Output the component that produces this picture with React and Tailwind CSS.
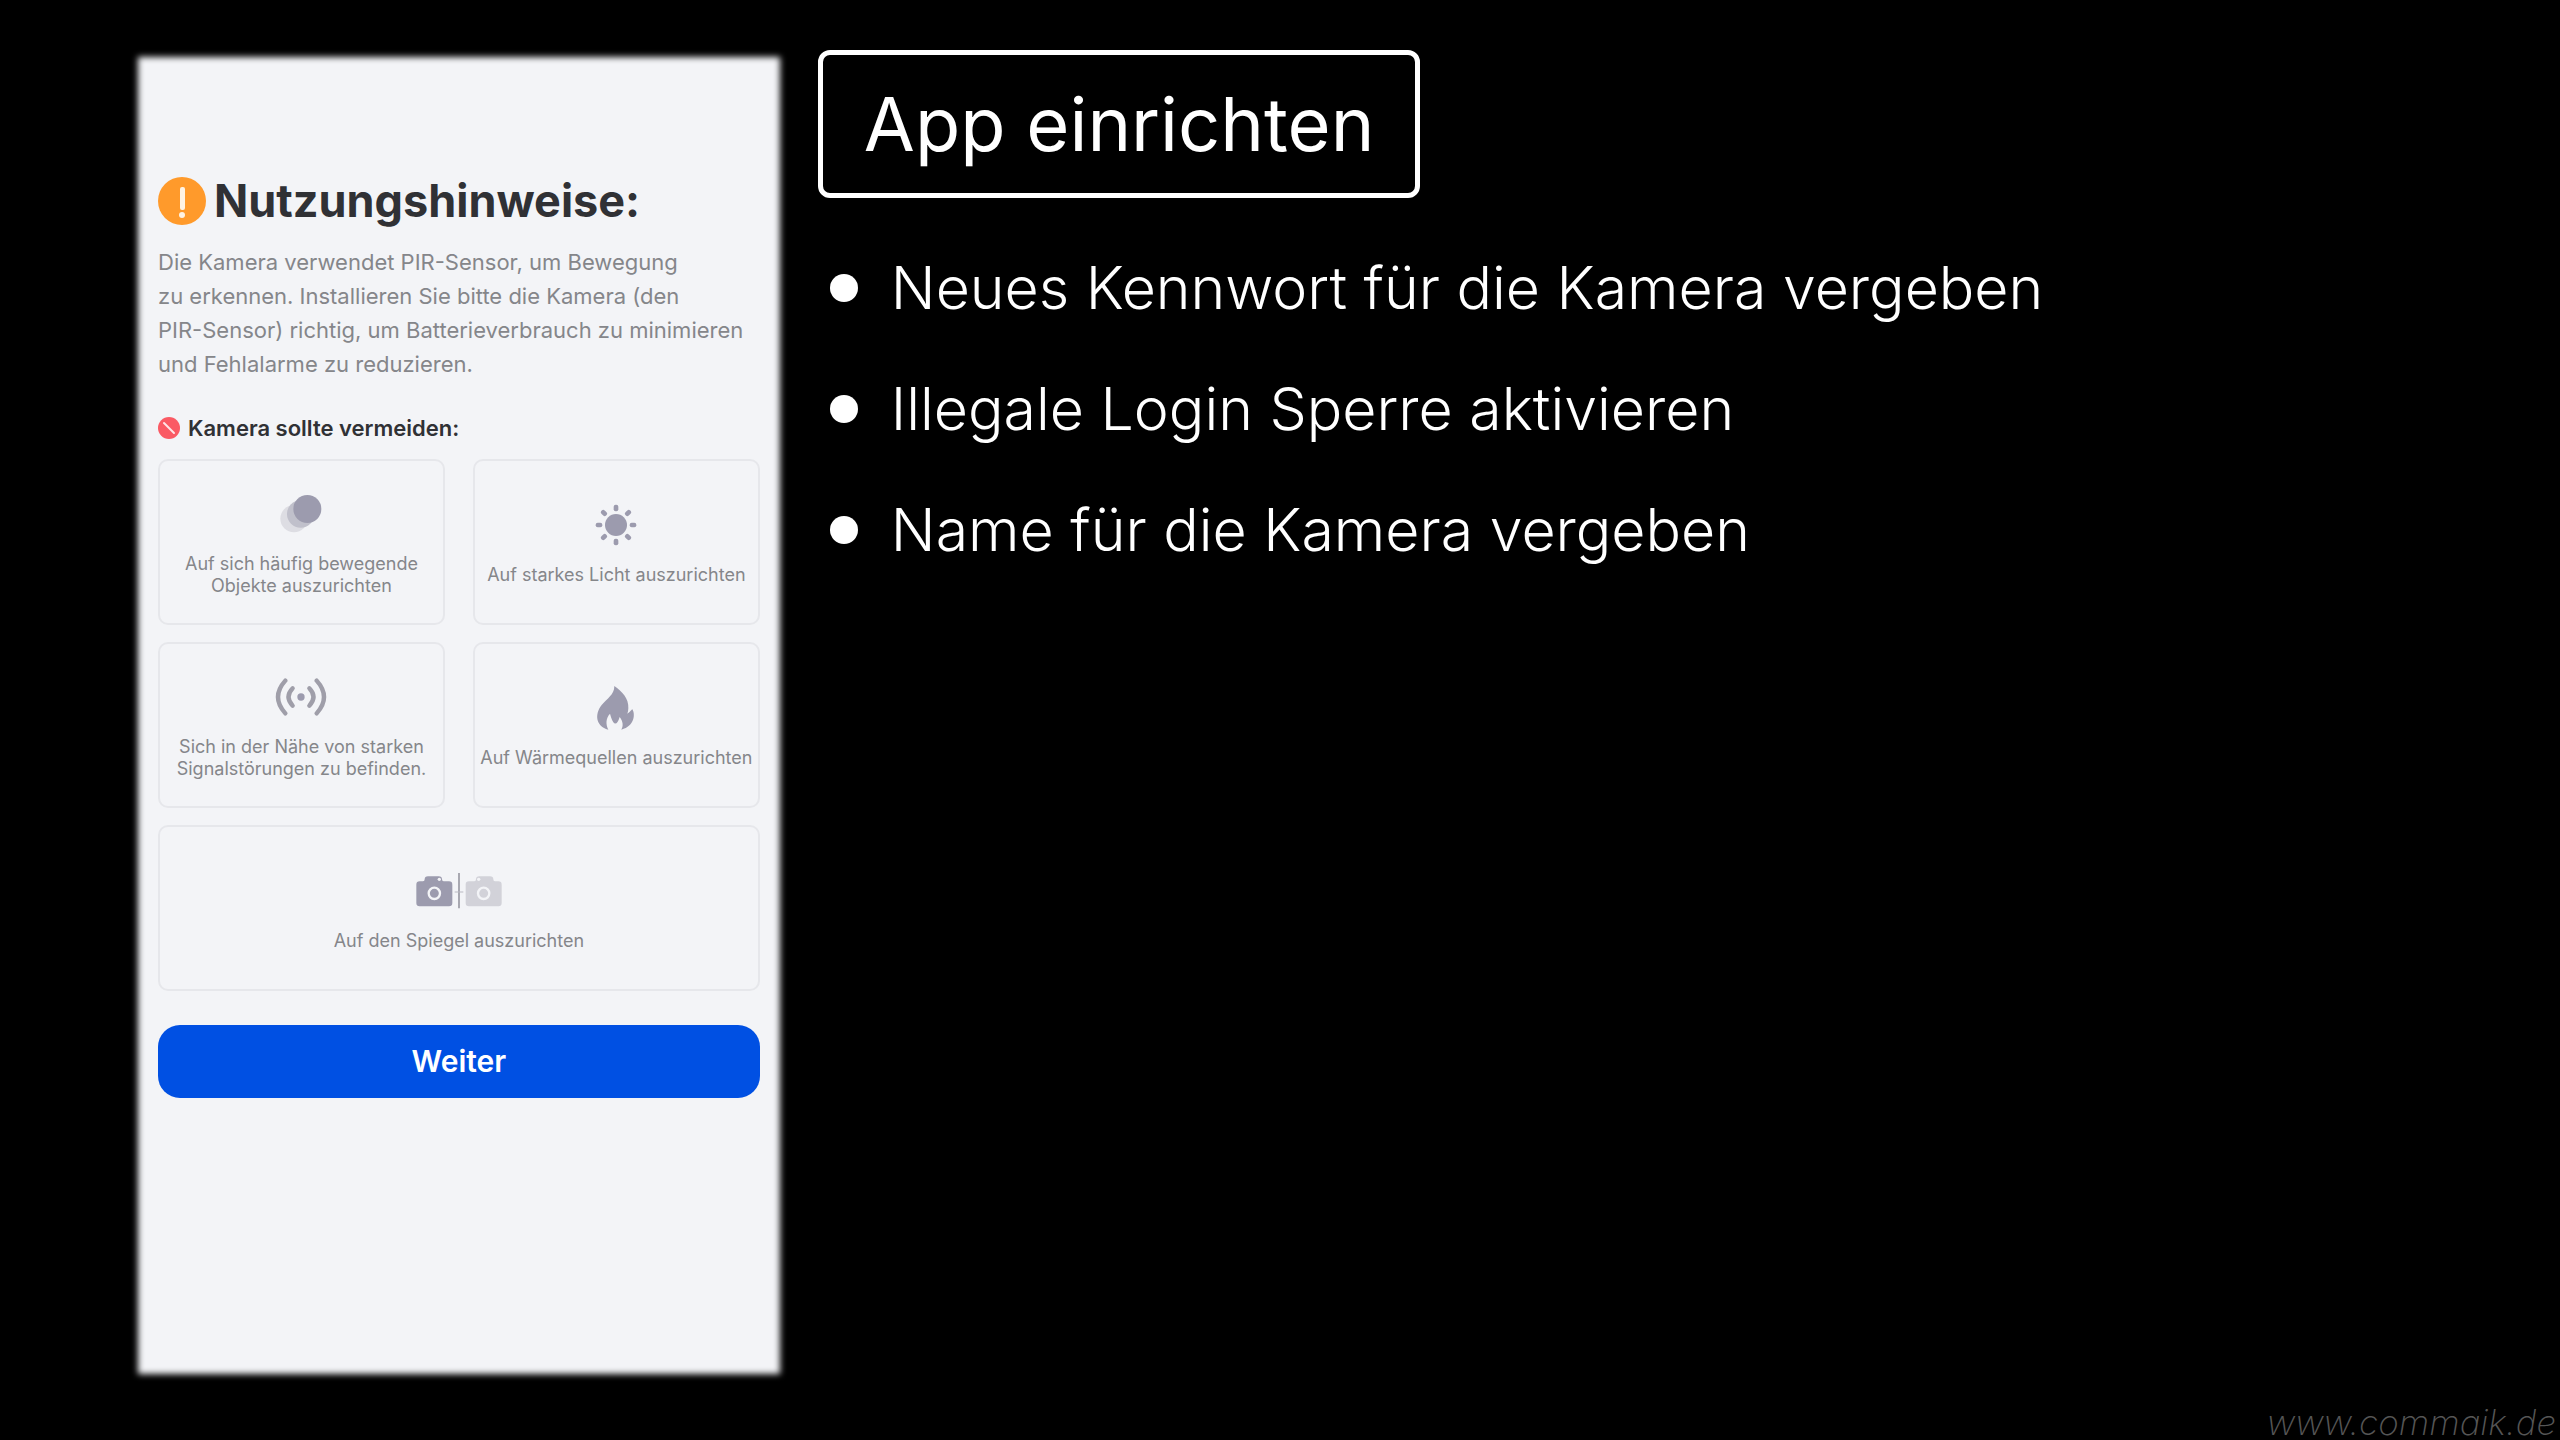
const MotionIcon = () => (
  <svg viewBox="0 0 162 162" className="h-[54px] w-[54px]" aria-hidden="true">
    <circle cx="60" cy="95" r="41" fill="#dddde3" />
    <circle cx="80" cy="81" r="41" fill="#c0c0cb" />
    <circle cx="100" cy="66" r="42" fill="#9c9bae" />
  </svg>
);

const SunIcon = () => (
  <svg viewBox="0 0 162 162" className="h-[54px] w-[54px]" aria-hidden="true">
    <circle cx="81" cy="81" r="33" fill="#9c9bae" />
    {[0, 45, 90, 135, 180, 225, 270, 315].map((angle) => (
      <rect key={angle} x="74" y="20" width="14" height="20" rx="6" fill="#9c9bae" transform={`rotate(${angle} 81 81)`} />
    ))}
  </svg>
);

const SignalIcon = () => (
  <svg viewBox="0 0 162 162" className="h-[54px] w-[54px]" fill="none" stroke="#9f9ea9" strokeWidth="13" strokeLinecap="round" aria-hidden="true">
    <circle cx="81" cy="81" r="11" fill="#9c9bae" stroke="none" />
    <path d="M56 55Q31 81 56 107M106 55Q131 81 106 107" />
    <path d="M34 32Q-10 81 34 130M128 32Q172 81 128 130" />
  </svg>
);

const FlameIcon = () => (
  <svg viewBox="0 0 162 162" className="h-[54px] w-[54px]" aria-hidden="true">
    <path
      d="M76 15C98 30 120 52 118 82C118 88 117 93 115 98C124 93 129 84 130 85C139 98 138 136 97 146C103 136 103 122 92 108C90 114 88 120 85 124C82 129 76 129 73 124C68 116 65 106 63 98C50 112 50 130 58 146C20 136 16 100 38 72C54 52 76 42 76 15Z"
      fill="#9c9bae"
    />
  </svg>
);

const MirrorIcon = () => (
  <svg viewBox="0 0 270 162" className="h-[54px] w-[90px]" aria-hidden="true">
    <path d="M17 52H27Q32 52 32 46Q32 37 42 37H74Q84 37 84 46Q84 52 89 52H105Q115 52 115 62V117Q115 127 105 127H17Q7 127 7 117V62Q7 52 17 52Z" fill="#9c9bae" />
    <circle cx="61" cy="88" r="17" fill="none" stroke="#f3f4f7" strokeWidth="7" />
    <circle cx="76" cy="46" r="5" fill="#f3f4f7" />
    <path d="M135 27V133" stroke="#9a9aa3" strokeWidth="5" />
    <path d="M122 84H148" stroke="#b9b9c2" strokeWidth="3" />
    <path d="M253 52H243Q238 52 238 46Q238 37 228 37H196Q186 37 186 46Q186 52 181 52H165Q155 52 155 62V117Q155 127 165 127H253Q263 127 263 117V62Q263 52 253 52Z" fill="#d2d2d9" />
    <circle cx="209" cy="88" r="17" fill="none" stroke="#f3f4f7" strokeWidth="7" />
    <circle cx="194" cy="46" r="5" fill="#f3f4f7" />
  </svg>
);

const WARNINGS = [
  { icon: MotionIcon, lines: ["Auf sich häufig bewegende", "Objekte auszurichten"] },
  { icon: SunIcon, lines: ["Auf starkes Licht auszurichten"] },
  { icon: SignalIcon, lines: ["Sich in der Nähe von starken", "Signalstörungen zu befinden."] },
  { icon: FlameIcon, lines: ["Auf Wärmequellen auszurichten"] },
  { icon: MirrorIcon, lines: ["Auf den Spiegel auszurichten"], wide: true },
];

const STEPS = [
  "Neues Kennwort für die Kamera vergeben",
  "Illegale Login Sperre aktivieren",
  "Name für die Kamera vergeben",
];

const WarningCard = ({ icon: Icon, lines, wide }) => (
  <li className={`flex min-h-[166px] flex-col items-center justify-center gap-3 rounded-[10px] border-2 border-[#e6e7eb] ${wide ? "col-span-2" : ""}`}>
    <Icon />
    <p className="text-center text-[18px] leading-[22px] whitespace-nowrap text-[#85868a]">
      {lines.map((line) => (
        <span key={line} className="block">{line}</span>
      ))}
    </p>
  </li>
);

const PhoneScreen = () => (
  <section className="relative mt-[7px] w-[26.5%] min-w-[640px] shrink-0 px-5 pt-[116px] pb-[276px]">
    <div className="absolute inset-0 bg-[#f3f4f7] blur-[3px]" />
    <div className="relative">
      <div className="flex items-center gap-2">
        <svg viewBox="0 0 48 48" className="h-12 w-12 shrink-0" aria-hidden="true">
          <circle cx="24" cy="24" r="24" fill="#ff9a2b" />
          <rect x="22" y="10" width="5" height="23" rx="2" fill="#fff3e3" />
          <circle cx="24" cy="38" r="3" fill="#fff3e3" />
        </svg>
        <h2 className="text-[45px] leading-[56px] font-bold text-[#303135]">Nutzungshinweise:</h2>
      </div>
      <p className="mt-4 text-[22px] leading-[34px] whitespace-nowrap text-[#85868a]">
        Die Kamera verwendet PIR-Sensor, um Bewegung<br />
        zu erkennen. Installieren Sie bitte die Kamera (den<br />
        PIR-Sensor) richtig, um Batterieverbrauch zu minimieren<br />
        und Fehlalarme zu reduzieren.
      </p>
      <div className="mt-8 flex items-center gap-2">
        <svg viewBox="0 0 22 22" className="h-[22px] w-[22px]" aria-hidden="true">
          <circle cx="11" cy="11" r="11" fill="#fa5a64" />
          <path d="M6 6L16 16" stroke="#ffe4e6" strokeWidth="2" strokeLinecap="round" />
        </svg>
        <h3 className="text-[22px] leading-[30px] font-semibold text-[#303135]">Kamera sollte vermeiden:</h3>
      </div>
      <ul className="mt-4 grid grid-cols-2 gap-x-7 gap-y-[17px]">
        {WARNINGS.map((warning) => (
          <WarningCard key={warning.lines[0]} {...warning} />
        ))}
      </ul>
      <button type="button" className="mt-[34px] h-[73px] w-full rounded-[22px] bg-[#0050e3] text-[30px] font-semibold text-white">
        Weiter
      </button>
    </div>
  </section>
);

export default function App() {
  return (
    <main className="relative flex min-h-screen items-start overflow-hidden bg-black pt-[50px] pb-[60px] pl-[138px] font-['Inter',sans-serif] text-white">
      <PhoneScreen />
      <section className="ml-[38px]">
        <h1 className="inline-block rounded-xl border-[5px] border-white px-[41px] py-[27px] text-[74px] leading-[84px]">App einrichten</h1>
        <ul className="mt-[50px] flex flex-col gap-[41px]">
          {STEPS.map((step) => (
            <li key={step} className="flex items-center gap-[33px] pl-3 text-[59px] leading-[80px] font-light">
              <span className="h-7 w-7 shrink-0 rounded-full bg-white" />
              {step}
            </li>
          ))}
        </ul>
      </section>
      <footer className="absolute right-1 bottom-0 text-[35px] leading-[36px] font-extralight text-[#555555] italic">www.commaik.de</footer>
    </main>
  );
}
